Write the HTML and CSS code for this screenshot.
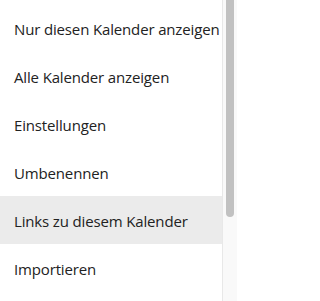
FILE: index.html
```html
<!DOCTYPE html>
<html lang="de">
<head>
<meta charset="utf-8">
<link rel="stylesheet" href="styles.css">
</head>
<body>
<div class="frame">
  <ul class="menu">
    <li class="item">Nur diesen Kalender anzeigen</li>
    <li class="item">Alle Kalender anzeigen</li>
    <li class="item">Einstellungen</li>
    <li class="item">Umbenennen</li>
    <li class="item item-active">Links zu diesem Kalender</li>
    <li class="item">Importieren</li>
  </ul>
  <div class="scrollbar"><div class="thumb"></div></div>
</div>
</body>
</html>
```
FILE: styles.css
```css
html, body {
  margin: 0;
  padding: 0;
  background: #ffffff;
  overflow: hidden;
}
.frame {
  display: flex;
  width: 237px;
  height: 301px;
}
.menu {
  list-style: none;
  margin: 0;
  padding: 4px 0 0 0;
  width: 222px;
  flex: none;
  overflow: hidden;
}
.item {
  height: 48px;
  box-sizing: border-box;
  padding: 2px 0 0 14px;
  display: flex;
  align-items: center;
  font-family: "Open Sans", sans-serif;
  font-size: 15px;
  letter-spacing: -0.15px;
  color: #222222;
  white-space: nowrap;
}
.item-active {
  background: #ebebeb;
}
.scrollbar {
  width: 15px;
  flex: none;
  background: #f9f9f9;
  border-left: 1px solid #e8e8e8;
  box-sizing: border-box;
  padding: 0 3px 0 3px;
}
.thumb {
  height: 217px;
  background: #c1c1c1;
  border-radius: 0 0 4px 4px;
}
```
